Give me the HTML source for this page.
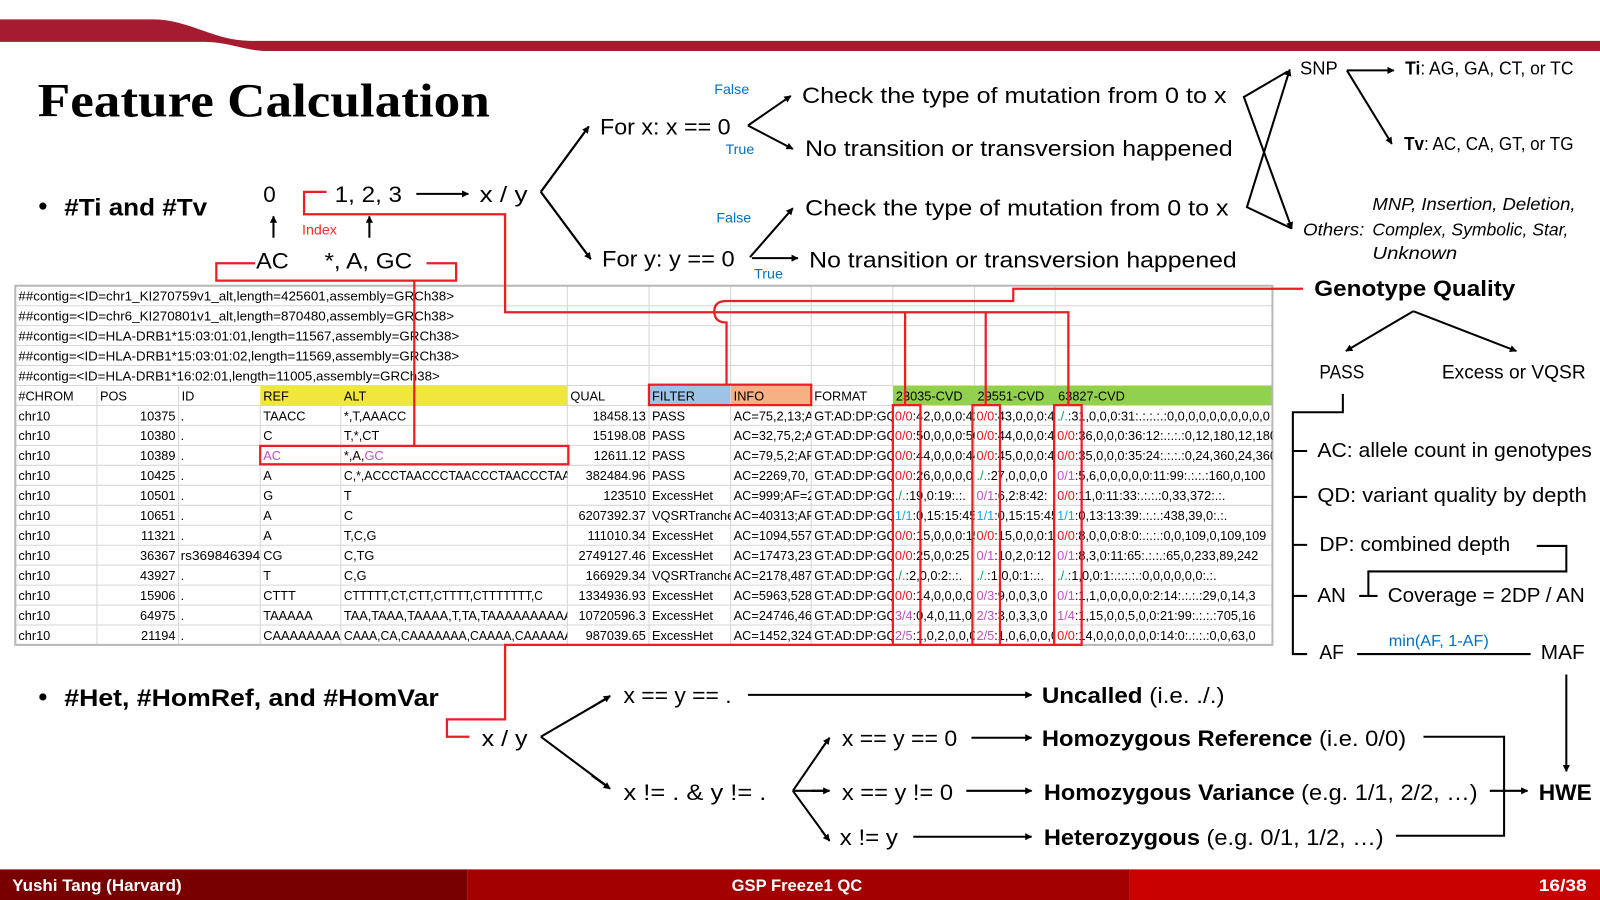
<!DOCTYPE html>
<html><head><meta charset="utf-8"><style>
html,body{margin:0;padding:0;background:#fff;width:1600px;height:900px;overflow:hidden}
svg{display:block}
.t{font-family:"Liberation Sans",sans-serif;fill:#000}
.tb{font-family:"Liberation Sans Narrow","Liberation Sans",sans-serif;font-size:12.5px;fill:#000}
.bl{fill:#0070c0}
.r{fill:#e8141c}.g{fill:#00a651}.m{fill:#c24fc0}.c{fill:#1aa3e0}
</style></head><body>
<svg width="1600" height="900" viewBox="0 0 1568 882" xmlns="http://www.w3.org/2000/svg">
<defs>
<marker id="a" viewBox="0 0 10 10" refX="9" refY="5" markerWidth="7" markerHeight="7" orient="auto" markerUnits="userSpaceOnUse"><path d="M0,0 L10,5 L0,10 z" fill="#000"/></marker>
<clipPath id="cT"><rect x="15" y="280" width="1232" height="353"/></clipPath>
<clipPath id="c0"><rect x="15" y="280" width="80" height="353"/></clipPath>
<clipPath id="c1"><rect x="95" y="280" width="80" height="353"/></clipPath>
<clipPath id="c2"><rect x="175" y="280" width="80" height="353"/></clipPath>
<clipPath id="c3"><rect x="255" y="280" width="79" height="353"/></clipPath>
<clipPath id="c4"><rect x="334" y="280" width="222" height="353"/></clipPath>
<clipPath id="c5"><rect x="556" y="280" width="80" height="353"/></clipPath>
<clipPath id="c6"><rect x="636" y="280" width="80" height="353"/></clipPath>
<clipPath id="c7"><rect x="716" y="280" width="79" height="353"/></clipPath>
<clipPath id="c8"><rect x="795" y="280" width="80" height="353"/></clipPath>
<clipPath id="c9"><rect x="875" y="280" width="80" height="353"/></clipPath>
<clipPath id="c10"><rect x="955" y="280" width="79" height="353"/></clipPath>
<clipPath id="c11"><rect x="1034" y="280" width="213" height="353"/></clipPath>
</defs>

<!-- top bar -->
<path d="M0,19 H150 C185,19 210,40 245,40 H1568 V50 H262 C240,50 225,41 200,41 H0 Z" fill="#a51c30"/>

<!-- title -->
<text x="37" y="114" font-family="Liberation Serif,serif" font-weight="bold" font-size="47" textLength="443" lengthAdjust="spacingAndGlyphs">Feature Calculation</text>

<!-- bullets -->
<circle cx="42" cy="202" r="3.5"/>
<text class="t" x="63" y="211" font-size="24" font-weight="bold" textLength="140" lengthAdjust="spacingAndGlyphs">#Ti and #Tv</text>
<circle cx="42" cy="683" r="3.5"/>
<text class="t" x="63" y="692" font-size="24" font-weight="bold" textLength="367" lengthAdjust="spacingAndGlyphs">#Het, #HomRef, and #HomVar</text>

<!-- top-left diagram -->
<g class="t" font-size="22">
<text x="258" y="198">0</text>
<text x="328" y="198" textLength="66" lengthAdjust="spacingAndGlyphs">1, 2, 3</text>
<text x="470" y="198" textLength="47" lengthAdjust="spacingAndGlyphs">x / y</text>
<text x="251" y="263" textLength="32" lengthAdjust="spacingAndGlyphs">AC</text>
<text x="318" y="263" textLength="86" lengthAdjust="spacingAndGlyphs">*, A, GC</text>
</g>
<text x="296" y="230" font-family="Liberation Sans,sans-serif" font-size="14" fill="#ff2a2a">Index</text>
<g stroke="#000" stroke-width="2" fill="none" marker-end="url(#a)">
<line x1="408" y1="190" x2="459" y2="190"/>
<line x1="268" y1="233" x2="268" y2="212"/>
<line x1="362" y1="233" x2="362" y2="212"/>
<line x1="530" y1="188" x2="577" y2="124"/>
<line x1="530" y1="188" x2="579" y2="254"/>
<line x1="733" y1="123" x2="775" y2="94"/>
<line x1="733" y1="123" x2="777" y2="146"/>
<line x1="735" y1="252" x2="777" y2="204"/>
<line x1="737" y1="253" x2="782" y2="253"/>
</g>
<path d="M530,188 L577,124 M530,188 L579,254" stroke="#000" stroke-width="2" fill="none"/>

<g class="t" font-size="22">
<text x="588" y="132" textLength="128" lengthAdjust="spacingAndGlyphs">For x: x == 0</text>
<text x="590" y="261" textLength="130" lengthAdjust="spacingAndGlyphs">For y: y == 0</text>
<text x="786" y="101" textLength="416" lengthAdjust="spacingAndGlyphs">Check the type of mutation from 0 to x</text>
<text x="789" y="153" textLength="419" lengthAdjust="spacingAndGlyphs">No transition or transversion happened</text>
<text x="789" y="211" textLength="415" lengthAdjust="spacingAndGlyphs">Check the type of mutation from 0 to x</text>
<text x="793" y="262" textLength="419" lengthAdjust="spacingAndGlyphs">No transition or transversion happened</text>
</g>
<g font-family="Liberation Sans,sans-serif" font-size="14" class="bl">
<text x="700" y="92">False</text>
<text x="711" y="151">True</text>
<text x="702" y="218">False</text>
<text x="739" y="273">True</text>
</g>

<!-- X lines to SNP / Others -->
<g stroke="#000" stroke-width="2" fill="none">
<path d="M1262,70 L1219,95 L1266,224" marker-end="url(#a)"/>
<path d="M1266,224 L1222,203 L1264,68" marker-end="url(#a)"/>
<path d="M1320,69 H1366" marker-end="url(#a)"/>
<path d="M1320,69 L1364,141" marker-end="url(#a)"/>
</g>
<g class="t" font-size="18">
<text x="1274" y="73">SNP</text>
<text x="1377" y="73" textLength="165" lengthAdjust="spacingAndGlyphs"><tspan font-weight="bold">Ti</tspan>: AG, GA, CT, or TC</text>
<text x="1376" y="147" textLength="166" lengthAdjust="spacingAndGlyphs"><tspan font-weight="bold">Tv</tspan>: AC, CA, GT, or TG</text>
</g>
<g class="t" font-size="17" font-style="italic">
<text x="1345" y="206" textLength="199" lengthAdjust="spacingAndGlyphs">MNP, Insertion, Deletion,</text>
<text x="1277" y="231" textLength="60" lengthAdjust="spacingAndGlyphs">Others:</text>
<text x="1345" y="231" textLength="192" lengthAdjust="spacingAndGlyphs">Complex, Symbolic, Star,</text>
<text x="1345" y="254" textLength="83" lengthAdjust="spacingAndGlyphs">Unknown</text>
</g>

<!-- Genotype quality -->
<text class="t" x="1288" y="290" font-size="22" font-weight="bold" textLength="197" lengthAdjust="spacingAndGlyphs">Genotype Quality</text>
<g stroke="#000" stroke-width="2" fill="none" marker-end="url(#a)">
<line x1="1385" y1="305" x2="1319" y2="344"/>
<line x1="1385" y1="305" x2="1486" y2="344"/>
</g>
<g class="t" font-size="19">
<text x="1293" y="371" textLength="44" lengthAdjust="spacingAndGlyphs">PASS</text>
<text x="1413" y="371" textLength="141" lengthAdjust="spacingAndGlyphs">Excess or VQSR</text>
</g>
<path d="M1316,386 V404 H1267 V641 H1281 M1267,442 H1281 M1267,487 H1281 M1267,534 H1281 M1267,584 H1281" stroke="#000" stroke-width="2" fill="none"/>
<g class="t" font-size="20">
<text x="1291" y="448" textLength="269" lengthAdjust="spacingAndGlyphs">AC: allele count in genotypes</text>
<text x="1291" y="492" textLength="264" lengthAdjust="spacingAndGlyphs">QD: variant quality by depth</text>
<text x="1293" y="540" textLength="187" lengthAdjust="spacingAndGlyphs">DP: combined depth</text>
<text x="1291" y="590" textLength="28" lengthAdjust="spacingAndGlyphs">AN</text>
<text x="1360" y="590" textLength="193" lengthAdjust="spacingAndGlyphs">Coverage = 2DP / AN</text>
<text x="1293" y="646" textLength="24" lengthAdjust="spacingAndGlyphs">AF</text>
<text x="1510" y="646" textLength="43" lengthAdjust="spacingAndGlyphs">MAF</text>
</g>
<text x="1361" y="633" font-family="Liberation Sans,sans-serif" font-size="15" class="bl" textLength="98" lengthAdjust="spacingAndGlyphs">min(AF, 1-AF)</text>
<path d="M1330,641 H1500 M1506,535 H1535 V560 H1341 V584 M1332,584 H1350" stroke="#000" stroke-width="2" fill="none"/>
<line x1="1535" y1="661" x2="1535" y2="756" stroke="#000" stroke-width="2" marker-end="url(#a)"/>
<text class="t" x="1508" y="784" font-size="22" font-weight="bold" textLength="52" lengthAdjust="spacingAndGlyphs">HWE</text>
<path d="M1395,722 H1474 V819 H1368" stroke="#000" stroke-width="2" fill="none"/>
<line x1="1460" y1="775" x2="1497" y2="775" stroke="#000" stroke-width="2" marker-end="url(#a)"/>

<!-- bottom diagram -->
<g class="t" font-size="22">
<text x="472" y="731" textLength="45" lengthAdjust="spacingAndGlyphs">x / y</text>
<text x="611" y="689" textLength="106" lengthAdjust="spacingAndGlyphs">x == y == .</text>
<text x="611" y="784" textLength="140" lengthAdjust="spacingAndGlyphs">x != . &amp; y != .</text>
<text x="825" y="731" textLength="113" lengthAdjust="spacingAndGlyphs">x == y == 0</text>
<text x="825" y="784" textLength="109" lengthAdjust="spacingAndGlyphs">x == y != 0</text>
<text x="823" y="828" textLength="57" lengthAdjust="spacingAndGlyphs">x != y</text>
<text x="1021" y="689" textLength="179" lengthAdjust="spacingAndGlyphs"><tspan font-weight="bold">Uncalled</tspan> (i.e. ./.)</text>
<text x="1021" y="731" textLength="357" lengthAdjust="spacingAndGlyphs"><tspan font-weight="bold">Homozygous Reference</tspan> (i.e. 0/0)</text>
<text x="1023" y="784" textLength="425" lengthAdjust="spacingAndGlyphs"><tspan font-weight="bold">Homozygous Variance</tspan> (e.g. 1/1, 2/2, …)</text>
<text x="1023" y="828" textLength="333" lengthAdjust="spacingAndGlyphs"><tspan font-weight="bold">Heterozygous</tspan> (e.g. 0/1, 1/2, …)</text>
</g>
<g stroke="#000" stroke-width="2" fill="none">
<path d="M530,722 L597,683 M530,722 L597,772 M777,775 L812,724 M777,775 L812,775 M777,775 L812,823"/>
</g>
<g stroke="#000" stroke-width="2" fill="none" marker-end="url(#a)">
<line x1="580" y1="693" x2="598" y2="682"/>
<line x1="580" y1="760" x2="598" y2="773"/>
<line x1="805" y1="734" x2="813" y2="723"/>
<line x1="795" y1="775" x2="813" y2="775"/>
<line x1="805" y1="814" x2="813" y2="824"/>
<line x1="733" y1="681" x2="1011" y2="681"/>
<line x1="952" y1="723" x2="1011" y2="723"/>
<line x1="947" y1="775" x2="1011" y2="775"/>
<line x1="895" y1="820" x2="1011" y2="820"/>
</g>

<!-- TABLE -->
<rect x="15" y="280" width="1232" height="352" fill="#fff"/>
<rect x="255" y="377.8" width="301" height="19.6" fill="#f0e63c"/>
<rect x="636" y="377.8" width="80" height="19.6" fill="#9dc3e6"/>
<rect x="716" y="377.8" width="79" height="19.6" fill="#f4b183"/>
<rect x="875" y="377.8" width="372" height="19.6" fill="#92d050"/>
<g stroke="#d6d6d6" stroke-width="1">
<path d="M15,299.6H1247M15,319.1H1247M15,338.7H1247M15,358.2H1247M15,377.8H1247M15,397.4H1247M15,416.9H1247M15,436.5H1247M15,456H1247M15,475.6H1247M15,495.2H1247M15,514.7H1247M15,534.3H1247M15,553.8H1247M15,573.4H1247M15,593H1247M15,612.5H1247"/>
<path d="M95,377.8V632M175,377.8V632M255,397.4V632M334,397.4V632M556,280V632M636,280V632M716,280V632M795,280V632M875,280V377.8M955,280V377.8M1034,280V377.8M875,397.4V632M955,397.4V632M1034,397.4V632"/>
</g>
<rect x="15" y="280" width="1232" height="352" fill="none" stroke="#b8b8b8" stroke-width="2"/>

<g class="tb" clip-path="url(#cT)">
<text x="18" y="294.5" textLength="427" lengthAdjust="spacingAndGlyphs">##contig=&lt;ID=chr1_KI270759v1_alt,length=425601,assembly=GRCh38&gt;</text>
<text x="18" y="314.1" textLength="427" lengthAdjust="spacingAndGlyphs">##contig=&lt;ID=chr6_KI270801v1_alt,length=870480,assembly=GRCh38&gt;</text>
<text x="18" y="333.6" textLength="432" lengthAdjust="spacingAndGlyphs">##contig=&lt;ID=HLA-DRB1*15:03:01:01,length=11567,assembly=GRCh38&gt;</text>
<text x="18" y="353.2" textLength="432" lengthAdjust="spacingAndGlyphs">##contig=&lt;ID=HLA-DRB1*15:03:01:02,length=11569,assembly=GRCh38&gt;</text>
<text x="18" y="372.7" textLength="413" lengthAdjust="spacingAndGlyphs">##contig=&lt;ID=HLA-DRB1*16:02:01,length=11005,assembly=GRCh38&gt;</text>
</g>

<g class="tb" clip-path="url(#c0)">
<text x="18" y="392.3">#CHROM</text>
<text x="18" y="411.9">chr10</text><text x="18" y="431.4">chr10</text><text x="18" y="451">chr10</text><text x="18" y="470.5">chr10</text><text x="18" y="490.1">chr10</text><text x="18" y="509.7">chr10</text><text x="18" y="529.2">chr10</text><text x="18" y="548.8">chr10</text><text x="18" y="568.3">chr10</text><text x="18" y="587.9">chr10</text><text x="18" y="607.5">chr10</text><text x="18" y="627">chr10</text>
</g>
<g class="tb" clip-path="url(#c1)">
<text x="98" y="392.3">POS</text>
</g>
<g class="tb" text-anchor="end">
<text x="172" y="411.9">10375</text><text x="172" y="431.4">10380</text><text x="172" y="451">10389</text><text x="172" y="470.5">10425</text><text x="172" y="490.1">10501</text><text x="172" y="509.7">10651</text><text x="172" y="529.2">11321</text><text x="172" y="548.8">36367</text><text x="172" y="568.3">43927</text><text x="172" y="587.9">15906</text><text x="172" y="607.5">64975</text><text x="172" y="627">21194</text>
</g>
<g class="tb" clip-path="url(#c2)">
<text x="178" y="392.3">ID</text>
<text x="177" y="411.9">.</text><text x="177" y="431.4">.</text><text x="177" y="451">.</text><text x="177" y="470.5">.</text><text x="177" y="490.1">.</text><text x="177" y="509.7">.</text><text x="177" y="529.2">.</text><text x="177" y="548.8" textLength="78" lengthAdjust="spacingAndGlyphs">rs369846394</text><text x="177" y="568.3">.</text><text x="177" y="587.9">.</text><text x="177" y="607.5">.</text><text x="177" y="627">.</text>
</g>
<g class="tb" clip-path="url(#c3)">
<text x="258" y="392.3">REF</text>
<text x="258" y="411.9">TAACC</text><text x="258" y="431.4">C</text><text x="258" y="451" class="m">AC</text><text x="258" y="470.5">A</text><text x="258" y="490.1">G</text><text x="258" y="509.7">A</text><text x="258" y="529.2">A</text><text x="258" y="548.8">CG</text><text x="258" y="568.3">T</text><text x="258" y="587.9">CTTT</text><text x="258" y="607.5">TAAAAA</text><text x="258" y="627">CAAAAAAAAA</text>
</g>
<g class="tb" clip-path="url(#c4)">
<text x="337" y="392.3">ALT</text>
<text x="337" y="411.9">*,T,AAACC</text><text x="337" y="431.4">T,*,CT</text><text x="337" y="451">*,A,<tspan class="m">GC</tspan></text><text x="337" y="470.5" textLength="222" lengthAdjust="spacingAndGlyphs">C,*,ACCCTAACCCTAACCCTAACCCTAA</text><text x="337" y="490.1">T</text><text x="337" y="509.7">C</text><text x="337" y="529.2">T,C,G</text><text x="337" y="548.8">C,TG</text><text x="337" y="568.3">C,G</text><text x="337" y="587.9" textLength="195" lengthAdjust="spacingAndGlyphs">CTTTTT,CT,CTT,CTTTT,CTTTTTTT,C</text><text x="337" y="607.5" textLength="224" lengthAdjust="spacingAndGlyphs">TAA,TAAA,TAAAA,T,TA,TAAAAAAAAAA</text><text x="337" y="627" textLength="224" lengthAdjust="spacingAndGlyphs">CAAA,CA,CAAAAAAA,CAAAA,CAAAAAA</text>
</g>
<g class="tb" clip-path="url(#c5)">
<text x="559" y="392.3">QUAL</text>
</g>
<g class="tb" text-anchor="end" clip-path="url(#c5)">
<text x="633" y="411.9">18458.13</text><text x="633" y="431.4">15198.08</text><text x="633" y="451">12611.12</text><text x="633" y="470.5">382484.96</text><text x="633" y="490.1">123510</text><text x="633" y="509.7">6207392.37</text><text x="633" y="529.2">111010.34</text><text x="633" y="548.8">2749127.46</text><text x="633" y="568.3">166929.34</text><text x="633" y="587.9">1334936.93</text><text x="633" y="607.5">10720596.3</text><text x="633" y="627">987039.65</text>
</g>
<g class="tb" clip-path="url(#c6)">
<text x="639" y="392.3">FILTER</text>
<text x="639" y="411.9">PASS</text><text x="639" y="431.4">PASS</text><text x="639" y="451">PASS</text><text x="639" y="470.5">PASS</text><text x="639" y="490.1">ExcessHet</text><text x="639" y="509.7">VQSRTranche</text><text x="639" y="529.2">ExcessHet</text><text x="639" y="548.8">ExcessHet</text><text x="639" y="568.3">VQSRTranche</text><text x="639" y="587.9">ExcessHet</text><text x="639" y="607.5">ExcessHet</text><text x="639" y="627">ExcessHet</text>
</g>
<g class="tb" clip-path="url(#c7)">
<text x="719" y="392.3">INFO</text>
<text x="719" y="411.9">AC=75,2,13;AF</text><text x="719" y="431.4">AC=32,75,2;AF</text><text x="719" y="451">AC=79,5,2;AF=</text><text x="719" y="470.5">AC=2269,70,</text><text x="719" y="490.1">AC=999;AF=2</text><text x="719" y="509.7">AC=40313;AF</text><text x="719" y="529.2">AC=1094,557</text><text x="719" y="548.8">AC=17473,23</text><text x="719" y="568.3">AC=2178,487</text><text x="719" y="587.9">AC=5963,528</text><text x="719" y="607.5">AC=24746,46</text><text x="719" y="627">AC=1452,324</text>
</g>
<g class="tb" clip-path="url(#c8)">
<text x="798" y="392.3">FORMAT</text>
<text x="798" y="411.9">GT:AD:DP:GQ</text><text x="798" y="431.4">GT:AD:DP:GQ</text><text x="798" y="451">GT:AD:DP:GQ</text><text x="798" y="470.5">GT:AD:DP:GQ</text><text x="798" y="490.1">GT:AD:DP:GQ</text><text x="798" y="509.7">GT:AD:DP:GQ</text><text x="798" y="529.2">GT:AD:DP:GQ</text><text x="798" y="548.8">GT:AD:DP:GQ</text><text x="798" y="568.3">GT:AD:DP:GQ</text><text x="798" y="587.9">GT:AD:DP:GQ</text><text x="798" y="607.5">GT:AD:DP:GQ</text><text x="798" y="627">GT:AD:DP:GQ</text>
</g>
<g class="tb" clip-path="url(#c9)">
<text x="878" y="392.3">23035-CVD</text>
<text x="877" y="411.9"><tspan class="r">0/0</tspan>:42,0,0,0:42</text>
<text x="877" y="431.4"><tspan class="r">0/0</tspan>:50,0,0,0:50</text>
<text x="877" y="451"><tspan class="r">0/0</tspan>:44,0,0,0:44</text>
<text x="877" y="470.5"><tspan class="r">0/0</tspan>:26,0,0,0,0</text>
<text x="877" y="490.1"><tspan class="g">./.</tspan>:19,0:19:.:.</text>
<text x="877" y="509.7"><tspan class="c">1/1</tspan>:0,15:15:45</text>
<text x="877" y="529.2"><tspan class="r">0/0</tspan>:15,0,0,0:15</text>
<text x="877" y="548.8"><tspan class="r">0/0</tspan>:25,0,0:25</text>
<text x="877" y="568.3"><tspan class="g">./.</tspan>:2,0,0:2:.:.</text>
<text x="877" y="587.9"><tspan class="r">0/0</tspan>:14,0,0,0,0</text>
<text x="877" y="607.5"><tspan class="m">3/4</tspan>:0,4,0,11,0</text>
<text x="877" y="627"><tspan class="m">2/5</tspan>:1,0,2,0,0,0</text>
</g>
<g class="tb" clip-path="url(#c10)">
<text x="958" y="392.3">29551-CVD</text>
<text x="957" y="411.9"><tspan class="r">0/0</tspan>:43,0,0,0:43</text>
<text x="957" y="431.4"><tspan class="r">0/0</tspan>:44,0,0,0:44</text>
<text x="957" y="451"><tspan class="r">0/0</tspan>:45,0,0,0:45</text>
<text x="957" y="470.5"><tspan class="g">./.</tspan>:27,0,0,0,0</text>
<text x="957" y="490.1"><tspan class="m">0/1</tspan>:6,2:8:42:</text>
<text x="957" y="509.7"><tspan class="c">1/1</tspan>:0,15:15:45</text>
<text x="957" y="529.2"><tspan class="r">0/0</tspan>:15,0,0,0:15</text>
<text x="957" y="548.8"><tspan class="m">0/1</tspan>:10,2,0:12</text>
<text x="957" y="568.3"><tspan class="g">./.</tspan>:1,0,0:1:.:.</text>
<text x="957" y="587.9"><tspan class="m">0/3</tspan>:9,0,0,3,0</text>
<text x="957" y="607.5"><tspan class="m">2/3</tspan>:3,0,3,3,0</text>
<text x="957" y="627"><tspan class="m">2/5</tspan>:1,0,6,0,0,0</text>
</g>
<g class="tb" clip-path="url(#c11)">
<text x="1037" y="392.3">63827-CVD</text>
<text x="1036" y="411.9"><tspan class="g">./.</tspan>:31,0,0,0:31:.:.:.:.:0,0,0,0,0,0,0,0,0,0</text>
<text x="1036" y="431.4"><tspan class="r">0/0</tspan>:36,0,0,0:36:12:.:.:.:0,12,180,12,180</text>
<text x="1036" y="451"><tspan class="r">0/0</tspan>:35,0,0,0:35:24:.:.:.:0,24,360,24,360</text>
<text x="1036" y="470.5"><tspan class="m">0/1</tspan>:5,6,0,0,0,0,0:11:99:.:.:.:160,0,100</text>
<text x="1036" y="490.1"><tspan class="r">0/0</tspan>:11,0:11:33:.:.:.:0,33,372:.:.</text>
<text x="1036" y="509.7"><tspan class="c">1/1</tspan>:0,13:13:39:.:.:.:438,39,0:.:.</text>
<text x="1036" y="529.2"><tspan class="r">0/0</tspan>:8,0,0,0:8:0:.:.:.:0,0,109,0,109,109</text>
<text x="1036" y="548.8"><tspan class="m">0/1</tspan>:8,3,0:11:65:.:.:.:65,0,233,89,242</text>
<text x="1036" y="568.3"><tspan class="g">./.</tspan>:1,0,0:1:.:.:.:.:0,0,0,0,0,0:.:.</text>
<text x="1036" y="587.9"><tspan class="m">0/1</tspan>:1,1,0,0,0,0,0:2:14:.:.:.:29,0,14,3</text>
<text x="1036" y="607.5"><tspan class="m">1/4</tspan>:1,15,0,0,5,0,0:21:99:.:.:.:705,16</text>
<text x="1036" y="627"><tspan class="r">0/0</tspan>:14,0,0,0,0,0,0:14:0:.:.:.:0,0,63,0</text>
</g>

<!-- red connectors -->
<g stroke="#ee1c25" stroke-width="2.2" fill="none">
<path d="M320,188 H298 V210 H495 V306 H1047 V397 M887,306 V397 M966,306 V397"/>
<path d="M250,258 H212 V275 H447 V258 H418 M406,275 V437"/>
<rect x="255" y="437" width="302" height="18"/>
<rect x="636" y="377" width="159" height="20"/>
<path d="M1277,283 H993 V295 H712 Q700,295 700,305 Q700,316 712,316 V377"/>
<rect x="875" y="397" width="27" height="235"/>
<rect x="953" y="397" width="27" height="235"/>
<rect x="1033" y="397" width="27" height="235"/>
<path d="M1060,632 H495 V705 H438 V722 H460"/>
</g>

<!-- footer -->
<rect x="0" y="852" width="458" height="30" fill="#780000"/>
<rect x="458" y="852" width="649" height="30" fill="#a30000"/>
<rect x="1107" y="852" width="461" height="30" fill="#c80000"/>
<g font-family="Liberation Sans Narrow,Liberation Sans,sans-serif" font-weight="bold" font-size="16" fill="#fff">
<text x="12" y="873" textLength="166" lengthAdjust="spacingAndGlyphs">Yushi Tang (Harvard)</text>
<text x="717" y="873" textLength="128" lengthAdjust="spacingAndGlyphs">GSP Freeze1 QC</text>
<text x="1508" y="873" textLength="47" lengthAdjust="spacingAndGlyphs">16/38</text>
</g>
</svg>
</body></html>
